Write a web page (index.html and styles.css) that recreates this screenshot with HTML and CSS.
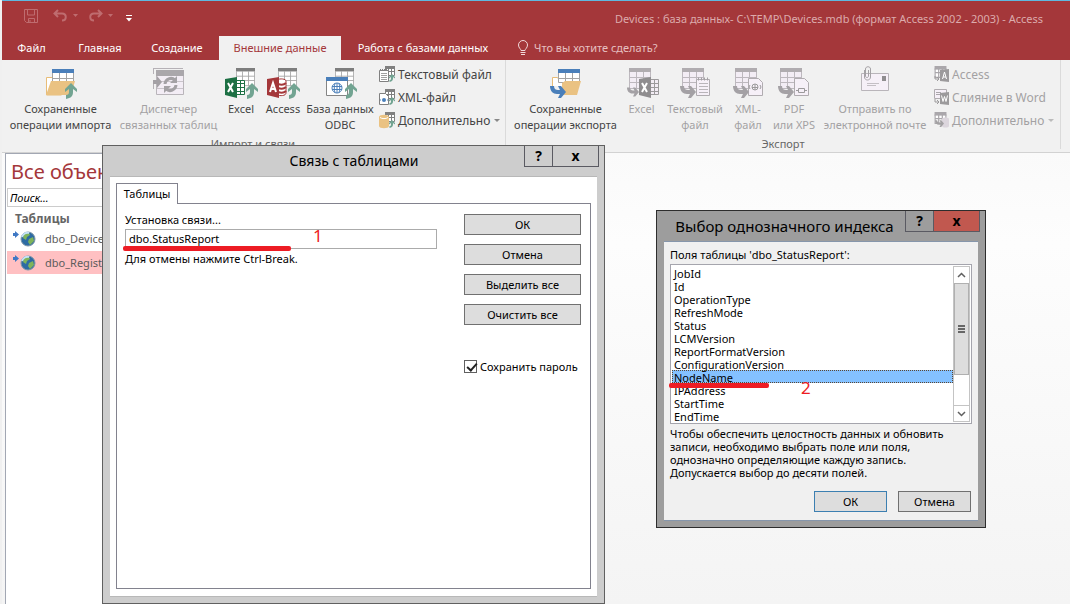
FILE: index.html
```html
<!DOCTYPE html>
<html lang="ru">
<head>
<meta charset="utf-8">
<title>Devices - Access</title>
<link rel="stylesheet" href="styles.css">
</head>
<body>
<svg class="defs" aria-hidden="true">
  <defs>
    <symbol id="grid" viewBox="0 0 22 21" preserveAspectRatio="xMinYMin slice">
      <path d="M0 0h22v21H0z" fill="#fff"/>
      <path d="M.5 4v16.500h21V4M.5 9.500h21M.5 14.500h21M7.500 4v16.500M14.500 4v16.500" fill="none" stroke="#a3a3a3"/>
      <path d="M0 0h22v4H0z" fill="#7d7d7d"/>
    </symbol>
    <symbol id="grid-off" viewBox="0 0 22 21">
      <path d="M0 0h22v21H0z" fill="#f3edf5"/>
      <path d="M.5 4v16.500h21V4M.5 9.500h21M.5 14.500h21M7.500 4v16.500M14.500 4v16.500" fill="none" stroke="#bdb8be"/>
      <path d="M0 0h22v4H0z" fill="#b0acb0"/>
    </symbol>
    <symbol id="grid-blue" viewBox="0 0 22 14">
      <path d="M0 0h22v14H0z" fill="#fff"/>
      <path d="M.5 4v9.500h21V4M.5 9.500h21M7.500 4v9.500M14.500 4v9.500" fill="none" stroke="#a3a3a3"/>
      <path d="M0 0h22v4H0z" fill="#4a7fba"/>
    </symbol>
    <symbol id="up" viewBox="0 0 12 16">
      <path d="M6 0l6 6v3L8 6v3c0 4-2 6-7 7v-4c2 0 3-1 3-3V6L0 9V6z" fill="#72a492"/>
    </symbol>
    <symbol id="out" viewBox="0 0 16 12">
      <path d="M0 0h4c0 3 2 4 4 4h2L8 0h3l5 6-5 6H8l2-4H7C3 8 0 5 0 0z" fill="currentColor"/>
    </symbol>
    <symbol id="grid-s" viewBox="0 0 10 10">
      <path d="M0 0h10v10H0z" fill="#fff"/>
      <path d="M.5 2v7.500h9V2M.5 5.500h9M3.500 2v7.500M6.500 2v7.500" fill="none" stroke="currentColor"/>
      <path d="M0 0h10v3H0z" fill="currentColor"/>
    </symbol>
    <symbol id="earth" viewBox="0 0 24 18">
      <circle cx="16" cy="9" r="7" fill="#2d6ba3" stroke="#7f96a8"/>
      <path d="M12 4l5-1 1 2-3 2-1 3-3-2zM17 9l4-2 1 4-4 4-2-3z" fill="#7fb45a"/>
      <path d="M10 7c1-3 4-5 7-4" fill="none" stroke="#c5e2f5" stroke-width="2"/>
      <path d="M1 3h2V1l4 3.500L3 8V6H1z" fill="#3f78c4"/>
    </symbol>
  </defs>
</svg>

<div class="app">
  <header class="titlebar">
    <div class="quick">
      <button class="qbtn" aria-label="Сохранить"><svg width="14" height="14"><path d="M.5.500h13v13h-11l-2-2zM3.500 1v5h7V1M4.500 13V9.500h6V13M6 11v2" fill="none" stroke="currentColor"/></svg></button>
      <button class="qbtn undo" aria-label="Отменить"><svg width="26" height="14"><path d="M5 1L1.500 4.500 5 8M2 4.500h7c5 0 5 7 0 7" fill="none" stroke="currentColor" stroke-width="2"/><path d="M20 5h5l-2.500 3z" fill="currentColor"/></svg></button>
      <button class="qbtn" aria-label="Вернуть"><svg width="26" height="14"><path d="M10 1l3.500 3.500L10 8M13 4.500H6c-5 0-5 7 0 7" fill="none" stroke="currentColor" stroke-width="2"/><path d="M20 5h5l-2.500 3z" fill="currentColor"/></svg></button>
      <button class="qbtn more" aria-label="Настройка панели"><svg width="6" height="8"><path d="M0 .500h6" stroke="#fff"/><path d="M0 3h6L3 6.500z" fill="#fff"/></svg></button>
    </div>
    <h1 class="doc-title">Devices : база данных- C:\TEMP\Devices.mdb (формат Access 2002 - 2003) - Access</h1>
  </header>
  <nav class="tabs">
    <button class="tab file">Файл</button>
    <button class="tab home">Главная</button>
    <button class="tab create">Создание</button>
    <button class="tab active">Внешние данные</button>
    <button class="tab db">Работа с базами данных</button>
    <button class="tab tell"><svg width="12" height="16"><path d="M4 10.500C4 9 1.500 8 1.500 5a4.500 4.500 0 0 1 9 0c0 3-2.500 4-2.500 5.500zM3.500 12.500h5M4 14.500h4" fill="none" stroke="#f2d9da"/></svg>Что вы хотите сделать?</button>
  </nav>

  <section class="ribbon">
    <div class="group import">
      <div class="tools">
        <button class="big w-saved"><svg width="34" height="32"><path d="M2.500 29V11.500h6l2 3h7V29z" fill="#fff" stroke="#e8bd78"/><use href="#grid-blue" x="8" y="3" width="22" height="14"/><path d="M7 15h24l-4 14H2z" fill="#eac282"/><use href="#up" x="21" y="17" width="12" height="16"/></svg><span>Сохраненные<br>операции импорта</span></button>
        <button class="big w-linked" disabled><svg width="34" height="32"><path d="M1 2.500h30M1.500 2v6M1.500 17v6" fill="none" stroke="#b5b1b6"/><path d="M4.500 4.500h27v24h-27z" fill="#f3edf5" stroke="#b9b5ba"/><path d="M4 4h28v6H4z" fill="#aaa7ab"/><path d="M5 15.500h26M5 22.500h26" stroke="#c9c4ca"/><path d="M1 14h4v-4l5 6-5 6v-4H1z" fill="#a4a1a5"/><path d="M13 18a6 6 0 0 1 10-4M24 19a6 6 0 0 1-10 4" fill="none" stroke="#a4a1a5" stroke-width="3"/><path d="M25 10v7h-7zM12 27v-7h7z" fill="#a4a1a5"/></svg><span>Диспетчер<br>связанных таблиц</span></button>
        <button class="big w-excel"><svg width="34" height="32"><use href="#grid" x="12" y="2" width="19" height="18"/><path d="M12.500 14.500h8v14h-8z" fill="#fff" stroke="#1d7044"/><path d="M13 17.500h7M13 21.500h7M13 25.500h7M16.500 15v13" stroke="#1d7044"/><path d="M1 13l12-2v21L1 29z" fill="#1d7044"/><path d="M4 17l5 9M9 17l-5 9" stroke="#fff" stroke-width="2"/><use href="#up" x="22" y="17" width="12" height="16"/></svg><span>Excel</span></button>
        <button class="big w-access"><svg width="34" height="32"><use href="#grid" x="12" y="2" width="19" height="18"/><path d="M11 14c3-2 9-1 9 1v12c0 3-6 3-9 2z" fill="#fff" stroke="#a4373a"/><path d="M12 18c3 1 6 1 8-1M12 22c3 1 6 1 8-1M12 26c3 1 6 1 8-1" fill="none" stroke="#a4373a" stroke-width="2"/><path d="M1 13l12-2v21L1 29z" fill="#a4373a"/><path d="M4 26l3-9 3 9M5 23h4" fill="none" stroke="#fff" stroke-width="2"/><use href="#up" x="22" y="17" width="12" height="16"/></svg><span>Access</span></button>
        <button class="big w-odbc"><svg width="34" height="32"><use href="#grid" x="12" y="2" width="19" height="18"/><path d="M3.500 11.500h21v18h-21z" fill="#fff" stroke="#858585"/><path d="M3 11h22v4H3z" fill="#4a7fba"/><circle cx="14" cy="22" r="5" fill="#fff" stroke="#4a7fba"/><path d="M9 20.500h10M9 23.500h10M14 17v10M12 17.500c-1 3-1 6 0 9M16 17.500c1 3 1 6 0 9" fill="none" stroke="#4a7fba"/><use href="#up" x="22" y="17" width="12" height="16"/></svg><span>База данных<br>ODBC</span></button>
        <div class="small-col">
          <button class="small"><svg width="17" height="17"><use href="#grid-s" x="6" y="0" width="10" height="10" color="#808080"/><path d="M.5 4.500h9v11h-9z" fill="#fff" stroke="#808080"/><path d="M2 7.500h6M2 9.500h6M2 11.500h6M2 13.500h6" stroke="#a0a0a0"/><path d="M1 3.500h8" stroke="#808080" stroke-dasharray="1 1"/><use href="#up" x="10" y="8" width="6" height="8"/></svg>Текстовый файл</button>
          <button class="small"><svg width="17" height="17"><use href="#grid-s" x="6" y="0" width="10" height="10" color="#808080"/><path d="M.5 4.500h6l3 3v8h-9z" fill="#fff" stroke="#808080"/><circle cx="5" cy="11" r="2" fill="#4a7fba"/><path d="M1 11h1M8 11h1" stroke="#4a7fba"/><use href="#up" x="10" y="8" width="6" height="8"/></svg>XML-файл</button>
          <button class="small"><svg width="17" height="17"><use href="#grid-s" x="6" y="0" width="10" height="10" color="#808080"/><path d="M0 5c0-3 10-3 10 0v9c0 3-10 3-10 0z" fill="#eac282"/><path d="M1 5.500c2 1.500 6 1.500 8 0" fill="none" stroke="#fff"/><use href="#up" x="10" y="8" width="6" height="8"/></svg>Дополнительно<i class="caret"></i></button>
        </div>
      </div>
      <h2 class="group-name">Импорт и связи</h2>
    </div>
    <div class="group export">
      <div class="tools">
        <button class="big w-saved"><svg width="34" height="32"><path d="M3.500 28V11.500h5l2 3h6V28z" fill="#fff" stroke="#e8bd78"/><use href="#grid-blue" x="9" y="3" width="22" height="14"/><path d="M13 17l3-2h16l-4 14H13z" fill="#eac282"/><path d="M1 20h16v10H1z" fill="#f1f1f1"/><path d="M13 20h5v9h-5z" fill="#eac282"/><use href="#out" x="1" y="20" width="16" height="12" color="#4a7fba"/></svg><span>Сохраненные<br>операции экспорта</span></button>
        <button class="big w-xl-out" disabled><svg width="34" height="32"><use href="#grid-off" x="4" y="2" width="22" height="21"/><path d="M25.500 13.500h8v15h-8z" fill="#f3edf5" stroke="#9c9a9c"/><path d="M26 17.500h7M26 21.500h7M26 25.500h7M29.500 14v14" stroke="#9c9a9c"/><path d="M14 13l12-2v21l-12-3z" fill="#8f8d8f"/><path d="M17 17l5 9M22 17l-5 9" stroke="#fff" stroke-width="2"/><use href="#out" x="2" y="21" width="12" height="10"/></svg><span>Excel</span></button>
        <button class="big w-text" disabled><svg width="34" height="32"><use href="#grid-off" x="4" y="2" width="22" height="21"/><path d="M18.500 13.500h13v16h-13z" fill="#f6f0f8" stroke="#b0acb0"/><path d="M21 17.500h9M21 20.500h9M21 23.500h9M21 26.500h9" stroke="#b9b5ba"/><path d="M20 13h11" stroke="#a4a1a5" stroke-width="3" stroke-dasharray="1 2"/><use href="#out" x="2" y="20" width="16" height="12"/></svg><span>Текстовый<br>файл</span></button>
        <button class="big w-xml" disabled><svg width="34" height="32"><use href="#grid-off" x="4" y="2" width="22" height="21"/><path d="M17.500 12.500h10l4 4v13h-14z" fill="#f6f0f8" stroke="#b0acb0"/><circle cx="24" cy="21" r="3" fill="none" stroke="#9c9a9c"/><path d="M21 21.500h6M24 18v6M19 19l-1 2 1 2M29 19l1 2-1 2" fill="none" stroke="#9c9a9c"/><use href="#out" x="2" y="20" width="16" height="12"/></svg><span>XML-<br>файл</span></button>
        <button class="big w-pdf" disabled><svg width="34" height="32"><use href="#grid-off" x="3" y="2" width="22" height="21"/><path d="M17.500 12.500h10l4 4v13h-14z" fill="#f6f0f8" stroke="#b0acb0"/><path d="M21.500 22.500h6v4h-6zM19 24.500h2M28 24.500h2" fill="none" stroke="#9c9a9c"/><use href="#out" x="1" y="20" width="16" height="12"/></svg><span>PDF<br>или XPS</span></button>
        <button class="big w-mail" disabled><svg width="34" height="32"><path d="M3.500 7.500h27v17h-27z" fill="#f6f0f8" stroke="#b9b5ba"/><path d="M24 10h4v5h-4z" fill="#8f8d8f"/><path d="M9 17.500h12M9 19.500h9" stroke="#c4bfc5"/><path d="M6.500 4v7c0 4 6 4 6 0V3c0-3-5-3-5 0v7c0 2 3 2 3 0V4" fill="none" stroke="#a4a1a5"/></svg><span>Отправить по<br>электронной почте</span></button>
        <div class="small-col">
          <button class="small" disabled><svg width="17" height="17"><use href="#grid-s" x="1" y="0" width="13" height="12" color="#aaa7ab"/><path d="M7 4l9-1v13l-9-1z" fill="#9c9a9c"/><path d="M9.500 13l2-7 2 7M10 11h3" fill="none" stroke="#fff" stroke-width="1"/><path d="M2 10v3h3M4 11l2 2-2 2" fill="none" stroke="#9c9a9c"/></svg>Access</button>
          <button class="small" disabled><svg width="17" height="17"><path d="M1.500.500h12v9h-12z" fill="#f6f0f8" stroke="#b0acb0"/><path d="M3 3.500h5M3 5.500h5" stroke="#aaa7ab"/><path d="M7 4l9-1v13l-9-1z" fill="#9c9a9c"/><path d="M8.500 6.500l1.500 6 1.500-5 1.500 5 1.500-6" fill="none" stroke="#fff"/><path d="M2 10v3h3M4 11l2 2-2 2" fill="none" stroke="#9c9a9c"/></svg>Слияние в Word</button>
          <button class="small" disabled><svg width="17" height="17"><use href="#grid-s" x="1" y="0" width="13" height="12" color="#aaa7ab"/><path d="M9 7c0-2 7-2 7 0v7c0 2-7 2-7 0z" fill="#dcd6dd"/><use href="#out" x="2" y="8" width="9" height="7"/></svg>Дополнительно<i class="caret"></i></button>
        </div>
      </div>
      <h2 class="group-name">Экспорт</h2>
    </div>
  </section>

  <main class="workspace">
    <aside class="nav-pane">
      <h2 class="nav-title">Все объекты</h2>
      <input class="search" type="text" placeholder="Поиск..." aria-label="Поиск">
      <h3 class="nav-group">Таблицы</h3>
      <button class="nav-item"><svg width="24" height="18"><use href="#earth"/></svg>dbo_Device</button>
      <button class="nav-item selected"><svg width="24" height="18"><use href="#earth"/></svg>dbo_Registr</button>
    </aside>
  </main>
</div>

<section class="window link-window" role="dialog" aria-labelledby="link-title">
  <header class="window-head">
    <h2 class="window-title" id="link-title">Связь с таблицами</h2>
    <div class="window-btns"><button class="help" aria-label="Справка">?</button><button class="close" aria-label="Закрыть">x</button></div>
  </header>
  <div class="window-body">
    <button class="sheet-tab">Таблицы</button>
    <div class="sheet">
      <div class="fields">
        <label for="conn">Установка связи...</label>
        <div class="marked">
          <input id="conn" class="conn" type="text" value="dbo.StatusReport">
          <span class="stroke"></span><span class="mark">1</span>
        </div>
        <p class="hint">Для отмены нажмите Ctrl-Break.</p>
      </div>
      <div class="actions">
        <button class="btn">ОК</button>
        <button class="btn">Отмена</button>
        <button class="btn">Выделить все</button>
        <button class="btn">Очистить все</button>
        <label class="check"><input type="checkbox" checked>Сохранить пароль</label>
      </div>
    </div>
  </div>
</section>

<section class="window index-window" role="dialog" aria-labelledby="index-title">
  <header class="window-head">
    <h2 class="window-title" id="index-title">Выбор однозначного индекса</h2>
    <div class="window-btns"><button class="help" aria-label="Справка">?</button><button class="close" aria-label="Закрыть">x</button></div>
  </header>
  <div class="window-body">
    <label for="cols">Поля таблицы 'dbo_StatusReport':</label>
    <div class="listbox">
      <select id="cols" class="list" size="12">
        <option>JobId</option><option>Id</option><option>OperationType</option><option>RefreshMode</option><option>Status</option><option>LCMVersion</option><option>ReportFormatVersion</option><option>ConfigurationVersion</option><option selected>NodeName</option><option>IPAddress</option><option>StartTime</option><option>EndTime</option>
      </select>
      <div class="scroll">
        <button class="arrow" aria-label="Вверх"><svg width="9" height="6"><path d="M1 5l3.500-3.500L8 5" fill="none" stroke="#606060" stroke-width="1.500"/></svg></button>
        <div class="thumb"></div>
        <button class="arrow down" aria-label="Вниз"><svg width="9" height="6"><path d="M1 1l3.500 3.500L8 1" fill="none" stroke="#606060" stroke-width="1.500"/></svg></button>
      </div>
      <span class="stroke"></span><span class="mark">2</span>
    </div>
    <p class="note">Чтобы обеспечить целостность данных и обновить записи, необходимо выбрать поле или поля, однозначно определяющие каждую запись. Допускается выбор до десяти полей.</p>
    <div class="footer">
      <button class="btn primary">ОК</button>
      <button class="btn">Отмена</button>
    </div>
  </div>
</section>
</body>
</html>
```

FILE: styles.css
```css
* { box-sizing: border-box; }
html, body { height: 100%; }
body {
  margin: 0;
  position: relative;
  overflow: hidden;
  background: #f0f0f0;
  color: #444;
  font: 12px/16px "Noto Sans", "Open Sans", sans-serif;
}
h1, h2, h3, p { margin: 0; font-size: inherit; font-weight: normal; }
button, input, select { font: inherit; color: inherit; }
button { margin: 0; padding: 0; border: 0; background: none; }
svg { flex: none; overflow: visible; }
.defs { position: absolute; width: 0; height: 0; }

.app { display: flex; flex-direction: column; min-height: 100%; padding-left: 2px; }

/* title bar and tabs */
.titlebar {
  display: flex;
  justify-content: space-between;
  height: 36px;
  padding: 0 27px 0 22px;
  border-top: 1px solid #5fb8e0;
  background: #a4373a;
}
.quick { display: flex; align-items: center; padding-bottom: 5px; color: #bf6c6f; }
.qbtn { display: flex; margin-right: 9px; }
.qbtn.undo { margin-left: 6px; }
.qbtn.more { margin-left: 3px; padding-top: 5px; }
.doc-title { padding-top: 10px; color: #dcabac; font-size: 11px; }
.tabs { display: flex; height: 24px; background: #a4373a; color: #fff; font-size: 11px; }
.tab { white-space: nowrap; }
.tab.file { width: 59px; }
.tab.home { width: 78px; }
.tab.create { width: 80px; padding-right: 4px; }
.tab.active { width: 122px; background: #f1f1f1; color: #a4373a; }
.tab.db { width: 164px; }
.tab.tell { display: flex; align-items: center; gap: 5px; padding-left: 12px; color: #e6c0c1; }

/* ribbon */
.ribbon {
  display: flex;
  height: 93px;
  padding-left: 4px;
  border-bottom: 1px solid #d2d2d2;
  background: #f1f1f1;
}
.group { display: flex; flex-direction: column; border-right: 1px solid #dadada; margin-bottom: 3px; }
.group.import { width: 500px; padding-right: 5px; }
.group.export { width: 555px; padding-left: 5px; }
.tools { display: flex; flex: none; height: 76px; }
.export .group-name { padding-right: 5px; }
.group-name { text-align: center; color: #666; font-size: 11px; }
.big { display: flex; flex-direction: column; align-items: center; gap: 3px; padding-top: 6px; flex: none; font-size: 11px; }
.big span { white-space: nowrap; }
.big:disabled, .small:disabled { color: #a3a1a3; }
.big svg { color: #a4a1a5; }
.w-saved { width: 109px; }
.w-linked { width: 107px; }
.w-excel { width: 38px; }
.w-access { width: 46px; }
.w-odbc { width: 68px; }
.w-xl-out { width: 43px; }
.w-text { width: 64px; }
.w-xml { width: 42px; }
.w-pdf { width: 50px; }
.w-mail { width: 112px; }
.small-col { display: flex; flex-direction: column; padding: 3px 0 0 5px; }
.export .small-col { padding-left: 2px; }
.small { display: flex; align-items: center; gap: 2px; height: 23px; white-space: nowrap; }
.caret { margin-left: 2px; border: 3px solid transparent; border-top-color: #888; border-bottom: 0; }
.small:disabled .caret { border-top-color: #bbb; }

/* workspace */
.workspace { display: flex; flex: 1; padding-left: 3px; background: linear-gradient(#fafafa, #fdfdfd 20%, #f4f4f4); }
.nav-pane { width: 200px; padding-left: 1px; border: 1px solid #a2a7b3; border-bottom: 0; background: #fff; }
.nav-title { padding: 5px 0 3px 4px; font-size: 20px; line-height: 26px; color: #a4373a; white-space: nowrap; }
.search { display: block; width: 100%; height: 19px; padding: 0 2px 1px; border: 1px solid #ccc; background: #fff; font-size: 11px; font-style: italic; }
.search::placeholder { color: #000; opacity: 1; }
.nav-group { padding: 3px 0 0 8px; font-weight: bold; line-height: 17px; color: #666; }
.nav-item { display: flex; align-items: center; gap: 9px; width: 100%; height: 24px; padding-left: 5px; font-size: 11px; line-height: 22px; color: #5c5c5c; }
.nav-item.selected { height: 23px; background: #ffc0c2; }

/* windows */
.window { position: absolute; display: flex; flex-direction: column; padding: 0 7px 6px; border: 1px solid #606060; color: #000; font-size: 11px; line-height: 13px; }
.window-head { display: flex; align-items: flex-start; }
.window-title { flex: 1; text-align: center; font-size: 14px; line-height: 30px; white-space: nowrap; }
.link-window .window-title { padding-left: 74px; }
.window-btns { display: flex; margin-right: -2px; border: 1px solid #5a5a62; border-top: 0; }
.window-btns button { height: 20px; font-size: 14px; line-height: 18px; font-weight: bold; }
.help { width: 27px; }
.window-btns .close { width: 46px; border-left: 1px solid #5a5a62; }
.window-body { display: flex; flex-direction: column; flex: 1; }
.btn { height: 21px; border: 1px solid #707070; background: #ddd; }

.link-window { left: 102px; top: 145px; width: 503px; height: 459px; background: #cdcdcd; }
.link-window .window-body { padding: 6px 6px 7px; border-top: 1px solid #b8b8b8; border-bottom: 1px solid #b8b8b8; background: #fff; }
.sheet-tab { z-index: 1; width: 62px; height: 21px; margin-bottom: -1px; padding-bottom: 1px; border: 1px solid #82828e; border-bottom: 0; background: #fff; }
.sheet { display: flex; flex: 1; justify-content: space-between; padding: 9px 9px 0 8px; border: 1px solid #82828e; }
.fields { width: 312px; }
.fields label { display: block; line-height: 14px; }
.marked { position: relative; margin-top: 2px; }
.conn { display: block; width: 100%; height: 20px; padding: 0 3px 2px; border: 1px solid #ababab; background: #fff; }
.hint { padding-top: 3px; }
.actions { display: flex; flex-direction: column; gap: 9px; width: 117px; margin-top: 1px; }
.check { display: flex; align-items: center; gap: 3px; padding-top: 26px; white-space: nowrap; }
.check input {
  appearance: none;
  width: 13px;
  height: 13px;
  margin: 0;
  border: 1px solid #606060;
  background: #fff;
}
.check input:checked::before { content: ""; display: block; width: 4px; height: 8px; margin: 0 0 0 4px; border: solid #222; border-width: 0 2px 2px 0; transform: rotate(42deg); }

.stroke { position: absolute; height: 5px; border-radius: 2px; background: #ed1c24; }
.mark { position: absolute; color: #ed1c24; font-size: 17px; line-height: 18px; }
.marked .stroke { left: -2px; bottom: -2px; width: 168px; }
.marked .mark { left: 188px; top: -2px; }

.index-window { left: 656px; top: 210px; width: 330px; height: 318px; border-color: #2d2d2d; background: #9d9d9d; }
.index-window .window-title { font-size: 15px; }
.index-window .window-body { padding: 6px 6px 0; border: 1px solid #8696ab; border-width: 1px 0; background: #f0f0f0; }
.index-window .window-btns .close { background: #c1584f; }
.listbox { position: relative; display: flex; height: 160px; margin-top: 3px; padding: 1px; border: 1px solid #a5a5ad; background: #fff; }
.list { flex: 1; height: 156px; padding: 0; border: 0; outline: 0; background: #fff; overflow: hidden; }
.list option { height: 13px; min-height: 13px; padding: 0 2px 2px; line-height: 11px; color: #000; }
.list option:checked { outline: 1px dotted #5a4632; outline-offset: -1px; background: #84c1ff linear-gradient(#84c1ff, #84c1ff); color: #000; }
.scroll { display: flex; flex-direction: column; width: 17px; border: 1px solid #c4c4c4; background: #fff; }
.arrow { display: flex; align-items: center; justify-content: center; height: 16px; }
.thumb {
  height: 92px;
  border: 1px solid #b0b0b0;
  background: linear-gradient(#666 2px, transparent 2px 3px, #666 3px 5px, transparent 5px 6px, #666 6px 8px) center / 7px 8px no-repeat #ddd;
}
.arrow.down { margin-top: auto; border-top: 1px solid #c4c4c4; }
.listbox .stroke { left: -2px; top: 118px; width: 100px; }
.listbox .mark { left: 130px; top: 114px; }
.note { padding-top: 3px; }
.footer { display: flex; justify-content: flex-end; gap: 11px; padding: 12px 1px 0 0; }
.footer .btn { width: 73px; }
.btn.primary { border-color: #3c7fb1; }
```
